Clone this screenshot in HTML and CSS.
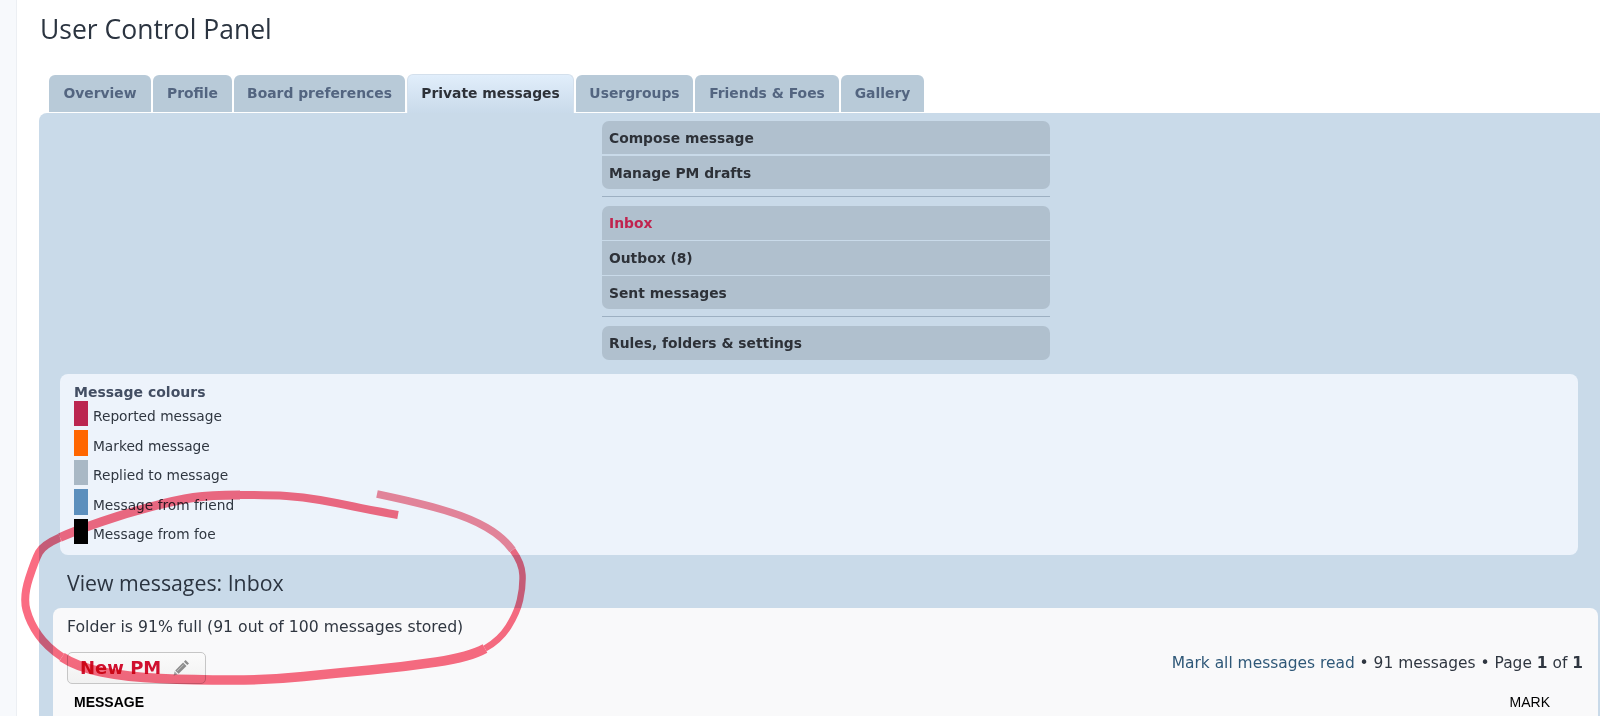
FILE: index.html
```html
<!DOCTYPE html>
<html lang="en">
<head>
<meta charset="utf-8">
<title>User Control Panel</title>
<link rel="stylesheet" href="styles.css">
</head>
<body>
<div class="page">
  <aside class="gutter"></aside>
  <main class="main">
    <h1 class="title">User Control Panel</h1>
    <nav class="tabs">
      <a class="tab tab-overview">Overview</a>
      <a class="tab tab-profile">Profile</a>
      <a class="tab tab-board">Board preferences</a>
      <a class="tab tab-active">Private messages</a>
      <a class="tab tab-groups">Usergroups</a>
      <a class="tab tab-friends">Friends &amp; Foes</a>
      <a class="tab tab-gallery">Gallery</a>
    </nav>
    <section class="panel">
      <div class="menu">
        <div class="menu-group">
          <a class="menu-item">Compose message</a>
          <a class="menu-item">Manage PM drafts</a>
        </div>
        <hr class="menu-rule">
        <div class="menu-group">
          <a class="menu-item menu-current">Inbox</a>
          <a class="menu-item">Outbox (8)</a>
          <a class="menu-item">Sent messages</a>
        </div>
        <hr class="menu-rule">
        <div class="menu-group">
          <a class="menu-item">Rules, folders &amp; settings</a>
        </div>
      </div>
      <div class="legend">
        <div class="legend-title">Message colours</div>
        <div class="legend-row"><span class="swatch sw-reported"></span><span>Reported message</span></div>
        <div class="legend-row"><span class="swatch sw-marked"></span><span>Marked message</span></div>
        <div class="legend-row"><span class="swatch sw-replied"></span><span>Replied to message</span></div>
        <div class="legend-row"><span class="swatch sw-friend"></span><span>Message from friend</span></div>
        <div class="legend-row"><span class="swatch sw-foe"></span><span>Message from foe</span></div>
      </div>
      <h2 class="view-title">View messages: Inbox</h2>
      <div class="inbox">
        <p class="folder">Folder is 91% full (91 out of 100 messages stored)</p>
        <div class="action-bar">
          <a class="new-pm">New PM
            <svg class="pencil" viewBox="0 0 17 17" width="17" height="17" aria-hidden="true"><path d="M12.6 1l3.4 3.4-1.7 1.7-3.4-3.4z" fill="#8c8c8c"/><path d="M10.1 3.5l3.4 3.4-7.9 7.9-3.4-3.4z" fill="#8c8c8c"/><path d="M1.6 12.3l3.1 3.1-4.1 1z" fill="#a5a5a5"/><path d="M10.6 5.6l-6.4 6.4" stroke="#d8d8d8" stroke-width=".7" fill="none"/></svg>
          </a>
          <div class="pagination"><a class="mark-read">Mark all messages read</a> • 91 messages • Page <b>1</b> of <b>1</b></div>
        </div>
        <div class="list-head"><span>MESSAGE</span><span class="list-mark">MARK</span></div>
      </div>
    </section>
  </main>
</div>
<svg class="scribble" viewBox="0 0 1600 716" width="1600" height="716" aria-hidden="true">
  <path class="ink" stroke-width="8" d="M398 515Q370 510 353.5 506.5Q337 503 320 500Q303 497 286.5 496Q270 495 240 495"/>
  <path class="ink" stroke-width="9" d="M240 495Q210 495 193.5 497.5Q177 500 152 506.5Q127 513 102 521.5Q77 530 60 537.5"/>
  <path class="ink" stroke-width="8" d="M60 537.5Q43 545 39 552.5Q35 560 29 578.5Q23 597 26.5 610Q30 623 38.5 635Q47 647 62 657"/>
  <path class="ink" stroke-width="9.5" d="M62 657Q77 667 102 672Q127 677 160 678.5Q193 680 231.5 680Q270 680 303.5 676.5Q337 673 370 670Q403 667 436.5 662Q470 657 485 648.5"/>
  <path class="ink" stroke-width="6.5" d="M485 648.5Q500 640 508.5 626.5Q517 613 520 600Q523 587 522.5 575Q522 563 512.5 550"/>
  <path class="ink ink-fade" stroke-width="7.5" d="M512.5 550Q503 537 486.5 527.5Q470 518 445 510.5Q420 503 377 494"/>
</svg>
</body>
</html>
```

FILE: styles.css
```css
* { box-sizing: border-box; }
html, body { margin: 0; height: 716px; overflow: hidden; background: #fff; }
body { font-family: "DejaVu Sans", Verdana, sans-serif; color: #2d3138; position: relative; }
.page { display: flex; height: 716px; }
.gutter { width: 17px; flex: none; background: #f7f9fc; border-right: 1px solid #eceff3; }
.main { flex: 1; min-width: 0; padding: 14px 0 0 22px; display: flex; flex-direction: column; }
.title { margin: 0 0 0 1px; font: 400 26.5px/30px "Open Sans", sans-serif; color: #2b3440; height: 61px; }
.tabs { display: flex; gap: 2px; padding-left: 10px; height: 37px; align-items: flex-end; }
.tab { height: 37px; padding-top: 8px; text-align: center; background: #b8cad8; color: #536580; font-size: 13.9px; font-weight: 700; line-height: 20px; border-radius: 6px 6px 0 0; }
.tab-overview { width: 102px; }
.tab-profile { width: 79px; }
.tab-board { width: 171px; }
.tab-active { width: 167px; height: 39px; color: #2d3138; background: linear-gradient(#e1eefb, #c9daea); border: 1px solid #d4e0ec; border-bottom: 0; padding-top: 8px; margin-bottom: -1px; }
.tab-groups { width: 117px; }
.tab-friends { width: 144px; }
.tab-gallery { width: 83px; }
.panel { flex: 1; background: #c9dae9; border-radius: 8px 0 0 0; margin-top: 1px; padding: 8px 2px 0 14px; display: flex; flex-direction: column; }
.menu { width: 448px; margin-left: 549px; }
.menu-group { display: flex; flex-direction: column; gap: 1.5px; border-radius: 7px; overflow: hidden; }
.menu-item { height: 33.4px; padding-left: 7px; background: #b0c0ce; color: #2d3138; font-size: 13.85px; font-weight: 700; line-height: 35px; }
.menu-current { color: #c0234e; }
.menu-rule { height: 1px; margin: 7px 0 9px; border: 0; background: #9db0c2; }
.legend { margin: 14px 20px 0 7px; height: 181px; padding: 9px 14px 0; background: #edf3fb; border-radius: 8px; font-size: 13.75px; }
.legend-title { font-weight: 700; font-size: 14px; line-height: 17px; padding-top: 1px; height: 16px; color: #434e63; }
.legend-row { display: flex; align-items: center; gap: 5px; height: 29.5px; color: #2f3640; line-height: 25px; }
.legend-row span:last-child { padding-top: 6px; }
.swatch { width: 14px; height: 25.5px; flex: none; }
.sw-reported { background: #bb2650; }
.sw-marked { background: #ff6600; }
.sw-replied { background: #a9b8c5; }
.sw-friend { background: #5c8fbd; }
.sw-foe { background: #000; }
.view-title { margin: 14px 0 0 14px; height: 39px; font: 400 21.3px/28px "Open Sans", sans-serif; color: #2b3440; }
.inbox { flex: 1; background: #f9f9fa; border-radius: 8px 8px 0 0; padding: 9px 15px 0 14px; font-size: 15.45px; }
.folder { margin: 0; line-height: 20px; height: 35px; color: #2f3640; font-size: 15.7px; }
.action-bar { display: flex; justify-content: space-between; align-items: center; height: 32px; }
.new-pm { width: 139px; height: 32px; display: flex; align-items: center; gap: 12px; padding-left: 12px; border: 1px solid #c6c6c6; border-radius: 5px; color: #d0102f; font-size: 18px; font-weight: 700; background: linear-gradient(#fbfbfb, #f1f1f1); }
.pencil { flex: none; }
.pagination { color: #2f3640; margin-top: -9px; }
.mark-read { color: #2f5878; }
.list-head { display: flex; justify-content: space-between; padding: 10px 33px 0 7px; font: 700 14px/16px "Liberation Sans", Arial, sans-serif; color: #000; }
.list-mark { font-weight: 400; }
.scribble { position: absolute; left: 0; top: 0; pointer-events: none; mix-blend-mode: multiply; }
.ink { fill: none; stroke: #fa6c82; stroke-linecap: butt; stroke-linejoin: round; }
.ink-fade { stroke: #f28a9c; }
```
